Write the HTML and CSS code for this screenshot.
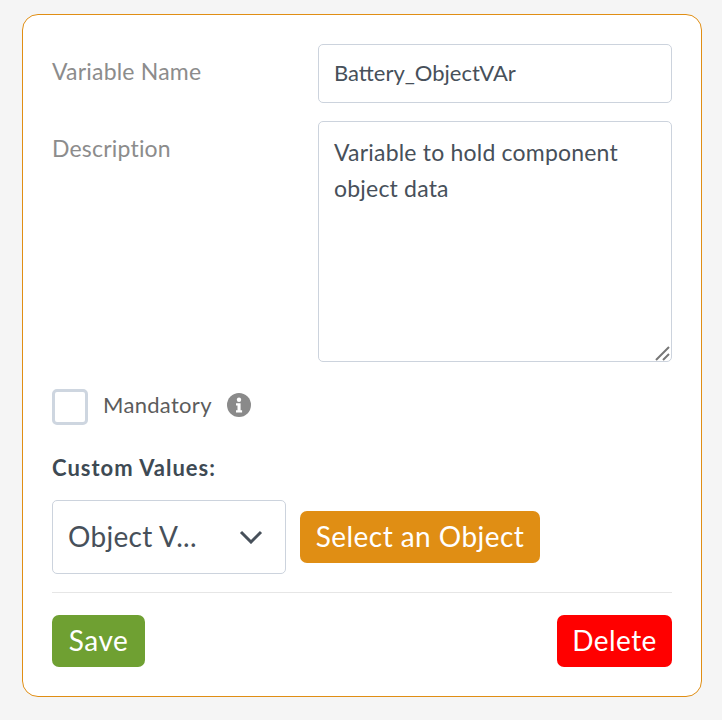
FILE: index.html
```html
<!DOCTYPE html>
<html lang="en">
<head>
    <meta charset="UTF-8">
    <meta name="viewport" content="width=device-width, initial-scale=1.0">
    <title>Variable</title>
    <link rel="stylesheet" href="styles.css">
</head>
<body>
    <div class="card">
        <div class="form-row">
            <label class="field-label">Variable Name</label>
            <input class="field-input" type="text" value="Battery_ObjectVAr">
        </div>
        <div class="form-row">
            <label class="field-label">Description</label>
            <div class="area-wrap">
                <textarea class="field-input field-area">Variable to hold component object data</textarea>
                <svg class="grip" width="16" height="16" viewBox="0 0 16 16">
                    <path d="M1 15L14 2M8 15l6-6" fill="none" stroke="#777" stroke-width="2"/>
                </svg>
            </div>
        </div>
        <div class="mandatory-row">
            <span class="checkbox"></span>
            <span class="mandatory-text">Mandatory</span>
            <svg class="info-icon" width="24" height="24" viewBox="0 0 24 24">
                <circle cx="12" cy="12" r="12" fill="#8a8a8a"/>
                <circle cx="12" cy="6.8" r="2.2" fill="#fff"/>
                <path d="M9 10.2h4.6v7h1.5v2.2H9v-2.2h1.5v-4.8H9z" fill="#fff"/>
            </svg>
        </div>
        <div class="custom-title">Custom Values:</div>
        <div class="custom-row">
            <div class="select-box">
                <span class="select-value">Object V...</span>
                <svg width="24" height="14" viewBox="0 0 24 14">
                    <path d="M2 2l10 10L22 2" fill="none" stroke="#47505a" stroke-width="3"/>
                </svg>
            </div>
            <button class="btn btn-orange">Select an Object</button>
        </div>
        <div class="actions">
            <button class="btn btn-green">Save</button>
            <button class="btn btn-red">Delete</button>
        </div>
    </div>
</body>
</html>
```

FILE: styles.css
```css
body {
    margin: 0;
    padding: 14px 20px 23px 22px;
    background-color: #f5f5f5;
    font-family: Lato, "Open Sans", sans-serif;
}
.card {
    box-sizing: border-box;
    height: 683px;
    padding: 29px 29px 0;
    background-color: #fff;
    border: 1px solid #e08e14;
    border-radius: 16px;
}
.form-row {
    display: flex;
    margin-bottom: 18px;
}
.field-label {
    width: 266px;
    padding-top: 13px;
    font-size: 23px;
    line-height: 28px;
    letter-spacing: 0.2px;
    color: #8c8c8c;
}
.field-input {
    box-sizing: border-box;
    width: 354px;
    height: 59px;
    margin: 0;
    padding: 0 15px 3px;
    font-family: inherit;
    font-size: 22px;
    color: #47505a;
    background: #fff;
    border: 1px solid #ccd3dd;
    border-radius: 5px;
    outline: none;
}
.area-wrap {
    position: relative;
    width: 354px;
}
.field-area {
    display: block;
    height: 241px;
    padding: 12px 15px;
    font-size: 23px;
    line-height: 36px;
    letter-spacing: 0.2px;
    resize: none;
}
.grip {
    position: absolute;
    right: 1px;
    bottom: 1px;
}
.mandatory-row {
    display: flex;
    align-items: center;
    margin-top: 27px;
}
.checkbox {
    box-sizing: border-box;
    width: 36px;
    height: 36px;
    border: 3px solid #ced6e0;
    border-radius: 5px;
}
.mandatory-text {
    margin: 0 0 5px 15px;
    font-size: 22px;
    letter-spacing: 0.3px;
    color: #5c5c5c;
}
.info-icon {
    margin: 0 0 4px 15px;
}
.custom-title {
    margin-top: 30px;
    font-size: 22px;
    line-height: 26px;
    font-weight: 700;
    letter-spacing: 1px;
    color: #3e4a54;
}
.custom-row {
    display: flex;
    align-items: center;
    gap: 14px;
    margin-top: 19px;
    padding-bottom: 18px;
    border-bottom: 1px solid #e6e6e6;
}
.select-box {
    box-sizing: border-box;
    display: flex;
    align-items: center;
    justify-content: space-between;
    width: 234px;
    height: 74px;
    padding: 0 22px 0 15px;
    border: 1px solid #ccd3dd;
    border-radius: 5px;
}
.select-value {
    margin-bottom: 2px;
    font-size: 28px;
    letter-spacing: 0.3px;
    color: #47505a;
}
.btn {
    height: 52px;
    padding: 0 0 3px;
    font-family: inherit;
    font-size: 28px;
    letter-spacing: 0.45px;
    color: #fff;
    border: none;
    border-radius: 7px;
}
.btn-orange {
    width: 240px;
    background-color: #e08e14;
}
.btn-green {
    width: 93px;
    background-color: #6fa032;
}
.btn-red {
    width: 115px;
    background-color: #ff0000;
}
.actions {
    display: flex;
    justify-content: space-between;
    margin-top: 22px;
}
```
